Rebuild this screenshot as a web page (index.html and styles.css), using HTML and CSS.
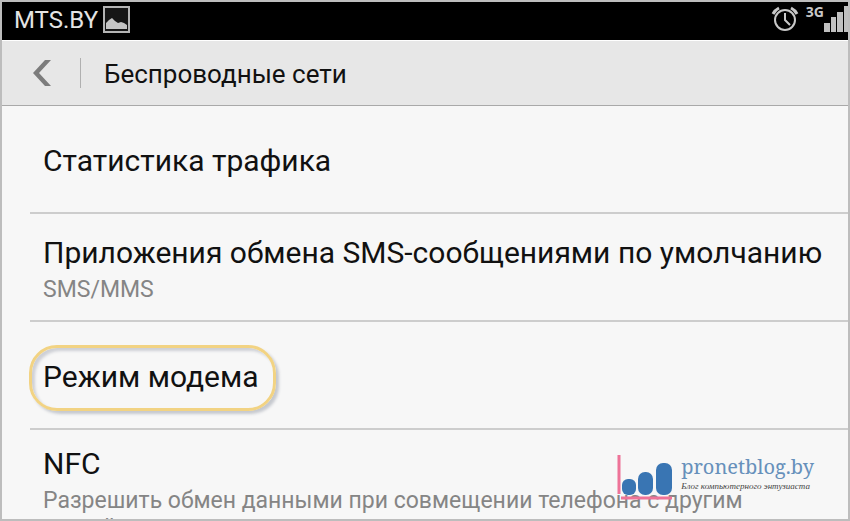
FILE: index.html
```html
<!DOCTYPE html>
<html lang="ru">
<head>
    <meta charset="UTF-8">
    <meta name="viewport" content="width=device-width, initial-scale=1.0">
    <title>Беспроводные сети</title>
    <link rel="stylesheet" href="styles.css">
</head>
<body>

    <div class="screen">
        <div class="status-bar">
            <span class="carrier">MTS.BY</span>
            <svg class="picture-icon" width="27" height="27" viewBox="0 0 27 27">
                <rect x="1" y="1" width="25" height="25" fill="#161616" stroke="#b4b4b4" stroke-width="2"/>
                <path d="M3 23v-6l3-3 3-2 3 3 3 2 3-1 3 1 3 2v4z" fill="#c4c4c4"/>
            </svg>
            <div class="status-right">
                <svg class="alarm-icon" width="28" height="26" viewBox="0 0 28 26" fill="none" stroke="#c8c8c8" stroke-width="2">
                    <circle cx="14" cy="14" r="10"/>
                    <path d="M14 7v7l5 5"/>
                    <path d="M2 8a13 13 0 0 1 6-6M20 2a13 13 0 0 1 6 6" stroke-width="3"/>
                </svg>
                <span class="network">3G</span>
                <svg class="signal-icon" width="24" height="26" viewBox="0 0 24 26" fill="#c0c0c0">
                    <path d="M0 17h6v9H0zM7 11h5v15H7zM13 6h6v20h-6zM20 0h4v26h-4z"/>
                </svg>
            </div>
        </div>

        <header class="action-bar">
            <button class="back-btn" type="button" aria-label="Назад">
                <svg width="18" height="26" viewBox="0 0 18 26">
                    <path d="M12 0h6L6 13l12 13h-6L0 13z" fill="#7c7c7c"/>
                </svg>
            </button>
            <h1>Беспроводные сети</h1>
        </header>

        <nav class="settings-list">
            <a class="item" href="#traffic">
                <span class="item-title">Статистика трафика</span>
            </a>
            <a class="item" href="#sms">
                <span class="item-title">Приложения обмена SMS-сообщениями по умолчанию</span>
                <span class="item-summary">SMS/MMS</span>
            </a>
            <a class="item" href="#tethering">
                <span class="item-title highlighted">Режим модема</span>
            </a>
            <a class="item" href="#nfc">
                <span class="item-title">NFC</span>
                <span class="item-summary">Разрешить обмен данными при совмещении телефона с другим устройством</span>
            </a>
        </nav>

        <!-- Blog watermark -->
        <div class="watermark">
            <svg width="57" height="46" viewBox="0 0 57 46">
                <path d="M2 0v39M4 43h51" fill="none" stroke="#ee7398" stroke-width="3"/>
                <rect x="5" y="24" width="14" height="16" rx="6" fill="#3975b3"/>
                <rect x="21" y="17" width="15" height="23" rx="7" fill="#3975b3"/>
                <rect x="39" y="8" width="16" height="32" rx="7" fill="#3975b3"/>
            </svg>
            <div class="watermark-text">
                <span class="site">pronetblog.by</span>
                <span class="tagline">Блог компьютерного энтузиаста</span>
            </div>
        </div>
    </div>

</body>
</html>
```
FILE: styles.css
```css
* {
    box-sizing: border-box;
}
body {
    margin: 0;
    font-family: Roboto, "Liberation Sans", sans-serif;
    color: #111;
}
.screen {
    position: relative;
    display: flex;
    flex-direction: column;
    height: 100vh;
    overflow: hidden;
    border: 2px solid #bdbdbd;
    background: #f7f7f7;
}
.status-bar {
    display: flex;
    align-items: center;
    flex: none;
    height: 38px;
    padding: 0 0 4px 12px;
    background: #000;
    color: #e4e4e4;
}
.carrier {
    padding-top: 2px;
    font-size: 24px;
    line-height: 34px;
}
.picture-icon {
    margin-left: 5px;
}
.status-right {
    display: flex;
    margin-left: auto;
}
.network {
    margin-left: 7px;
    font-family: "Noto Sans", sans-serif;
    font-size: 14px;
    font-weight: 700;
    line-height: 12px;
    color: #c8c8c8;
}
.action-bar {
    display: flex;
    align-items: center;
    flex: none;
    height: 66px;
    padding-left: 31px;
    border-top: 1px solid #fff;
    border-bottom: 1px solid #a9a9a9;
    background: #e7e7e7;
}
.back-btn {
    display: flex;
    align-items: center;
    height: 30px;
    padding: 0 29px 0 0;
    border: none;
    border-right: 1px solid #b0b0b0;
    background: none;
    cursor: pointer;
}
.action-bar h1 {
    margin: 0 0 0 23px;
    padding-top: 2px;
    font-size: 26px;
    font-weight: 400;
    line-height: 36px;
}
.settings-list {
    padding-left: 28px;
}
.item {
    display: flex;
    flex-direction: column;
    align-items: flex-start;
    justify-content: center;
    min-height: 108px;
    padding: 16px 12px 12px 13px;
    border-bottom: 2px solid #cdcdcd;
    color: inherit;
    text-decoration: none;
}
.item-title {
    font-size: 30px;
    line-height: 36px;
}
.item-summary {
    margin-top: 5px;
    font-size: 23px;
    line-height: 27px;
    color: #858585;
}
.highlighted {
    position: relative;
}
/* Golden ring around the marked item */
.highlighted::before {
    content: "";
    position: absolute;
    inset: -14px -17px -16px -14px;
    border: 3px solid #f2d383;
    border-radius: 28px;
    box-shadow: 3px 3px 3px #c6c9cf, inset 3px 3px 3px #ced0d6;
}
.watermark {
    position: absolute;
    right: 34px;
    bottom: 18px;
    display: flex;
    gap: 7px;
}
.watermark-text {
    display: flex;
    flex-direction: column;
    font-family: "Noto Serif", "DejaVu Serif", "Liberation Serif", serif;
}
.site {
    font-size: 20px;
    line-height: 24px;
    color: #6690bb;
}
.tagline {
    font-family: "Liberation Serif", serif;
    font-size: 9px;
    font-style: italic;
    line-height: 14px;
    color: #444;
}
```
